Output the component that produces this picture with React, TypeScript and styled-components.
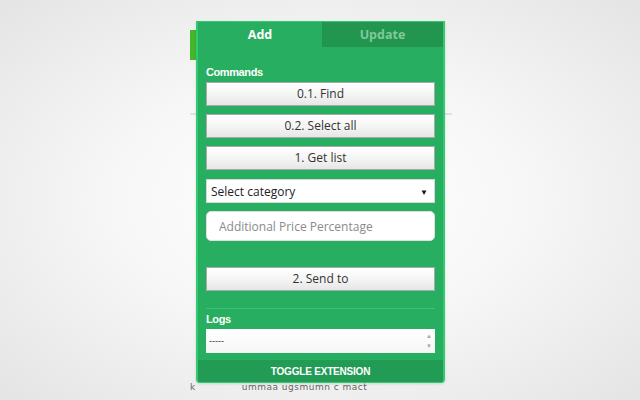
import styled, { createGlobalStyle } from 'styled-components';

const GlobalStyle = createGlobalStyle`
  html, body {
    margin: 0;
    padding: 0;
  }

  body {
    width: 640px;
    height: 400px;
    overflow: hidden;
    background: radial-gradient(ellipse at 50% 50%, #ffffff 0%, #f7f7f7 45%, #e4e4e4 100%);
    font-family: 'Open Sans', 'Liberation Sans', sans-serif;
  }
`;

const Styled = {
  Screen: styled.div`
    position: relative;
    width: 640px;
    height: 400px;
  `,

  // the web page underneath the extension popup
  Backdrop: styled.div`
    display: flex;
    flex-direction: column;
    padding: 30px 188px 0 190px;
    height: 100%;
    box-sizing: border-box;
  `,

  Logo: styled.div`
    width: 40px;
    height: 30px;
    background: #45b52c;
  `,

  Rule: styled.div`
    height: 2px;
    margin-top: 53px;
    background: #e2e2e2;
  `,

  FooterText: styled.div`
    display: flex;
    gap: 46px;
    margin-top: auto;
    margin-bottom: 8px;
    font-family: 'DejaVu Sans', sans-serif;
    font-size: 9px;
    color: #666;
    letter-spacing: 0.5px;
  `,

  Panel: styled.div`
    position: absolute;
    left: 196px;
    top: 21px;
    width: 249px;
    height: 362px;
    box-sizing: border-box;
    display: flex;
    flex-direction: column;
    background: #27ae60;
    border: 2px solid #2fcb6c;
    border-top-width: 1px;
    border-bottom-width: 1px;
    border-radius: 0 0 4px 4px;
    overflow: hidden;
    box-shadow: 0 1px 3px rgba(0, 0, 0, 0.12);
  `,

  Tabs: styled.div`
    display: grid;
    grid-template-columns: 124px 1fr;
    height: 25px;
  `,

  Tab: styled.div<{ $active?: boolean }>`
    display: flex;
    align-items: center;
    justify-content: center;
    font-family: 'Open Sans', sans-serif;
    font-weight: 700;
    font-size: 12.5px;
    color: ${({ $active }) => ($active ? '#ffffff' : '#80c99b')};
    background: ${({ $active }) => ($active ? 'transparent' : '#22954f')};
  `,

  Body: styled.div`
    display: flex;
    flex-direction: column;
    padding: 19px 8px 0 8px;
    flex: 1;
  `,

  Label: styled.div`
    font-family: 'Liberation Sans', Arial, sans-serif;
    font-weight: 700;
    font-size: 11px;
    line-height: 13px;
    letter-spacing: -0.4px;
    color: #ffffff;
    margin-bottom: 3px;
  `,

  Button: styled.button`
    height: 24px;
    margin-bottom: 8px;
    padding: 0 0 1px;
    border: 1px solid #a8aaa9;
    border-radius: 0;
    background: linear-gradient(#ffffff 0%, #f4f4f4 55%, #e6e6e6 100%);
    font-family: 'Open Sans', sans-serif;
    font-size: 12px;
    color: #333333;
    cursor: pointer;
  `,

  Select: styled.div`
    display: flex;
    align-items: center;
    justify-content: space-between;
    height: 24px;
    margin: 1px 0 8px;
    padding: 0 6px 0 4px;
    box-sizing: border-box;
    background: #ffffff;
    border: 1px solid #d6d6d6;
    font-family: 'Open Sans', sans-serif;
    font-size: 12px;
    color: #222222;
  `,

  Caret: styled.span`
    font-size: 8px;
    color: #111111;
  `,

  Input: styled.input`
    height: 30px;
    box-sizing: border-box;
    padding: 0 12px;
    border: 1px solid #e0e0e0;
    border-radius: 5px;
    background: #ffffff;
    font-family: 'Open Sans', sans-serif;
    font-size: 12px;
    outline: none;

    &::placeholder {
      color: #8a8a8a;
    }
  `,

  SendButton: styled.button`
    height: 24px;
    margin-top: 26px;
    padding: 0 0 1px;
    border: 1px solid #a8aaa9;
    background: linear-gradient(#ffffff 0%, #f4f4f4 55%, #e6e6e6 100%);
    font-family: 'Open Sans', sans-serif;
    font-size: 12px;
    color: #333333;
  `,

  Divider: styled.div`
    height: 1px;
    margin: 17px 0 4px;
    background: #3dc174;
  `,

  Logs: styled.div`
    display: flex;
    align-items: center;
    justify-content: space-between;
    height: 24px;
    padding: 0 3px 0 3px;
    box-sizing: border-box;
    background: linear-gradient(#ffffff, #f6f6f6);
    font-family: 'Liberation Sans', sans-serif;
    font-size: 9px;
    color: #333333;
  `,

  Spinner: styled.div`
    display: flex;
    flex-direction: column;
    gap: 4px;
    font-size: 6px;
    line-height: 6px;
    color: #a6a6a6;
  `,

  Toggle: styled.div`
    display: flex;
    align-items: center;
    justify-content: center;
    height: 22px;
    margin-top: auto;
    background: #229b55;
    font-family: 'Liberation Sans', Arial, sans-serif;
    font-weight: 700;
    font-size: 10px;
    letter-spacing: -0.2px;
    color: #ffffff;
  `,
};

const commands = ['0.1. Find', '0.2. Select all', '1. Get list'];

export default function App() {
  return (
    <Styled.Screen>
      <GlobalStyle />

      <Styled.Backdrop>
        <Styled.Logo />
        <Styled.Rule />
        <Styled.FooterText>
          <span>k</span>
          <span>ummaa ugsmumn c mact</span>
        </Styled.FooterText>
      </Styled.Backdrop>

      <Styled.Panel>
        <Styled.Tabs>
          <Styled.Tab $active>Add</Styled.Tab>
          <Styled.Tab>Update</Styled.Tab>
        </Styled.Tabs>

        <Styled.Body>
          <Styled.Label>Commands</Styled.Label>
          {commands.map((name) => (
            <Styled.Button key={name}>{name}</Styled.Button>
          ))}

          <Styled.Select>
            <span>Select category</span>
            <Styled.Caret>▼</Styled.Caret>
          </Styled.Select>

          <Styled.Input placeholder='Additional Price Percentage' />

          <Styled.SendButton>2. Send to</Styled.SendButton>

          <Styled.Divider />

          <Styled.Label>Logs</Styled.Label>
          <Styled.Logs>
            <span>-----</span>
            <Styled.Spinner>
              <span>▲</span>
              <span>▼</span>
            </Styled.Spinner>
          </Styled.Logs>
        </Styled.Body>

        <Styled.Toggle>TOGGLE EXTENSION</Styled.Toggle>
      </Styled.Panel>
    </Styled.Screen>
  );
}
